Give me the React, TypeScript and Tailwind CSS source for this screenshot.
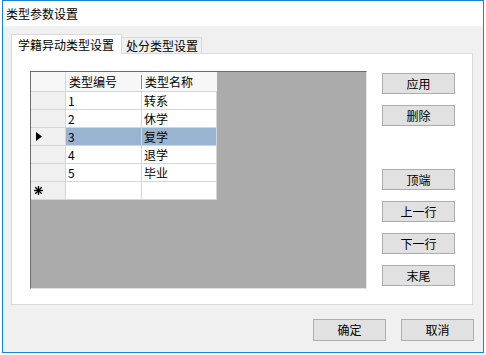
import React from "react";

const font = { fontFamily: '"Noto Sans CJK SC", "Liberation Sans", sans-serif' };

const rows = [
  { id: "1", name: "转系" },
  { id: "2", name: "休学" },
  { id: "3", name: "复学", selected: true },
  { id: "4", name: "退学" },
  { id: "5", name: "毕业" },
];

function Btn({ label, className = "" }: { label: string; className?: string }) {
  return (
    <div
      className={`w-[73px] flex items-center justify-center border border-[#adadad] bg-[#e1e1e1] text-[12px] leading-none text-black ${className}`}
    >
      {label}
    </div>
  );
}

function Asterisk() {
  return (
    <svg width="9" height="9" viewBox="0 0 9 9" className="block">
      <g stroke="#000" strokeWidth="1.3">
        <line x1="4.5" y1="0" x2="4.5" y2="9" />
        <line x1="0" y1="4.5" x2="9" y2="4.5" />
        <line x1="1.3" y1="1.3" x2="7.7" y2="7.7" />
        <line x1="7.7" y1="1.3" x2="1.3" y2="7.7" />
      </g>
    </svg>
  );
}

function Grid() {
  return (
    <div className="w-[337px] h-[218px] border-l border-t border-[#6d6d6d] border-r-[#e3e3e3] border-b-[#e3e3e3] border-r border-b bg-[#ababab]">
      <div className="w-[186px]">
        {/* header */}
        <div className="flex h-[20px] bg-[#f7f7f7] border-b border-[#d5d5d5]">
          <div className="w-[35px] border-r border-[#d5d5d5]" />
          <div className="w-[76px] flex items-center pl-[3px] text-[12px] relative">
            类型编号
            <div className="absolute right-0 top-[3px] h-[14px] w-px bg-[#8a8a8a]" />
          </div>
          <div className="w-[75px] flex items-center pl-[3px] text-[12px]">类型名称</div>
        </div>
        {rows.map((r) => (
          <div key={r.id} className="flex h-[18px] border-b border-[#d5d5d5]">
            <div className="w-[35px] bg-[#f0f0f0] border-r border-[#d5d5d5] flex items-center pl-[5px]">
              {r.selected && (
                <svg width="6" height="9" viewBox="0 0 6 9" className="block">
                  <path d="M0 0 L6 4.5 L0 9 Z" fill="#000" />
                </svg>
              )}
            </div>
            <div
              className={`w-[76px] flex items-center pl-[2px] text-[12px] border-r border-[#d5d5d5] ${
                r.selected ? "bg-[#99b4d1]" : "bg-white"
              }`}
            >
              {r.id}
            </div>
            <div
              className={`w-[75px] flex items-center pl-[2px] text-[12px] border-r border-[#d5d5d5] ${
                r.selected ? "bg-[#99b4d1]" : "bg-white"
              }`}
            >
              {r.name}
            </div>
          </div>
        ))}
        {/* new row */}
        <div className="flex h-[18px] border-b border-[#d5d5d5]">
          <div className="w-[35px] bg-[#f0f0f0] border-r border-[#d5d5d5] flex items-center pl-[3px]">
            <Asterisk />
          </div>
          <div className="w-[76px] bg-white border-r border-[#d5d5d5]" />
          <div className="w-[75px] bg-white border-r border-[#d5d5d5]" />
        </div>
      </div>
    </div>
  );
}

export default function App() {
  return (
    <div className="w-[486px] h-[355px] bg-white text-black" style={font}>
      <div className="ml-[2px] w-[482px] h-[353px] border border-[#1883d7] bg-[#f0f0f0] flex flex-col">
        {/* title bar */}
        <div className="h-[25px] bg-white flex items-center pl-[3px] text-[12px]">类型参数设置</div>

        {/* tabs */}
        <div className="ml-[8px] mt-[8px] flex items-end h-[19px]">
          <div className="relative z-10 h-[20px] -mb-px w-[111px] bg-white border-t border-l border-r border-[#d9d9d9] flex items-center pl-[6px] text-[12px]">
            学籍异动类型设置
          </div>
          <div className="h-[16px] w-[80px] border-t border-r border-[#d9d9d9] flex items-center pl-[4px] text-[12px]">
            处分类型设置
          </div>
        </div>
        <div className="ml-[8px] w-[462px] h-[252px] bg-white border border-[#d9d9d9] pl-[18px] pt-[17px] flex">
          <Grid />
          <div className="ml-[15px] mt-[2px] flex flex-col">
            <Btn label="应用" className="h-[21px]" />
            <Btn label="删除" className="h-[21px] mt-[11px]" />
            <Btn label="顶端" className="h-[21px] mt-[43px]" />
            <Btn label="上一行" className="h-[21px] mt-[11px]" />
            <Btn label="下一行" className="h-[21px] mt-[11px]" />
            <Btn label="末尾" className="h-[21px] mt-[11px]" />
          </div>
        </div>

        {/* bottom buttons */}
        <div className="mt-[14px] flex justify-end pr-[9px] gap-[15px]">
          <Btn label="确定" className="h-[22px]" />
          <Btn label="取消" className="h-[22px]" />
        </div>
      </div>
    </div>
  );
}
